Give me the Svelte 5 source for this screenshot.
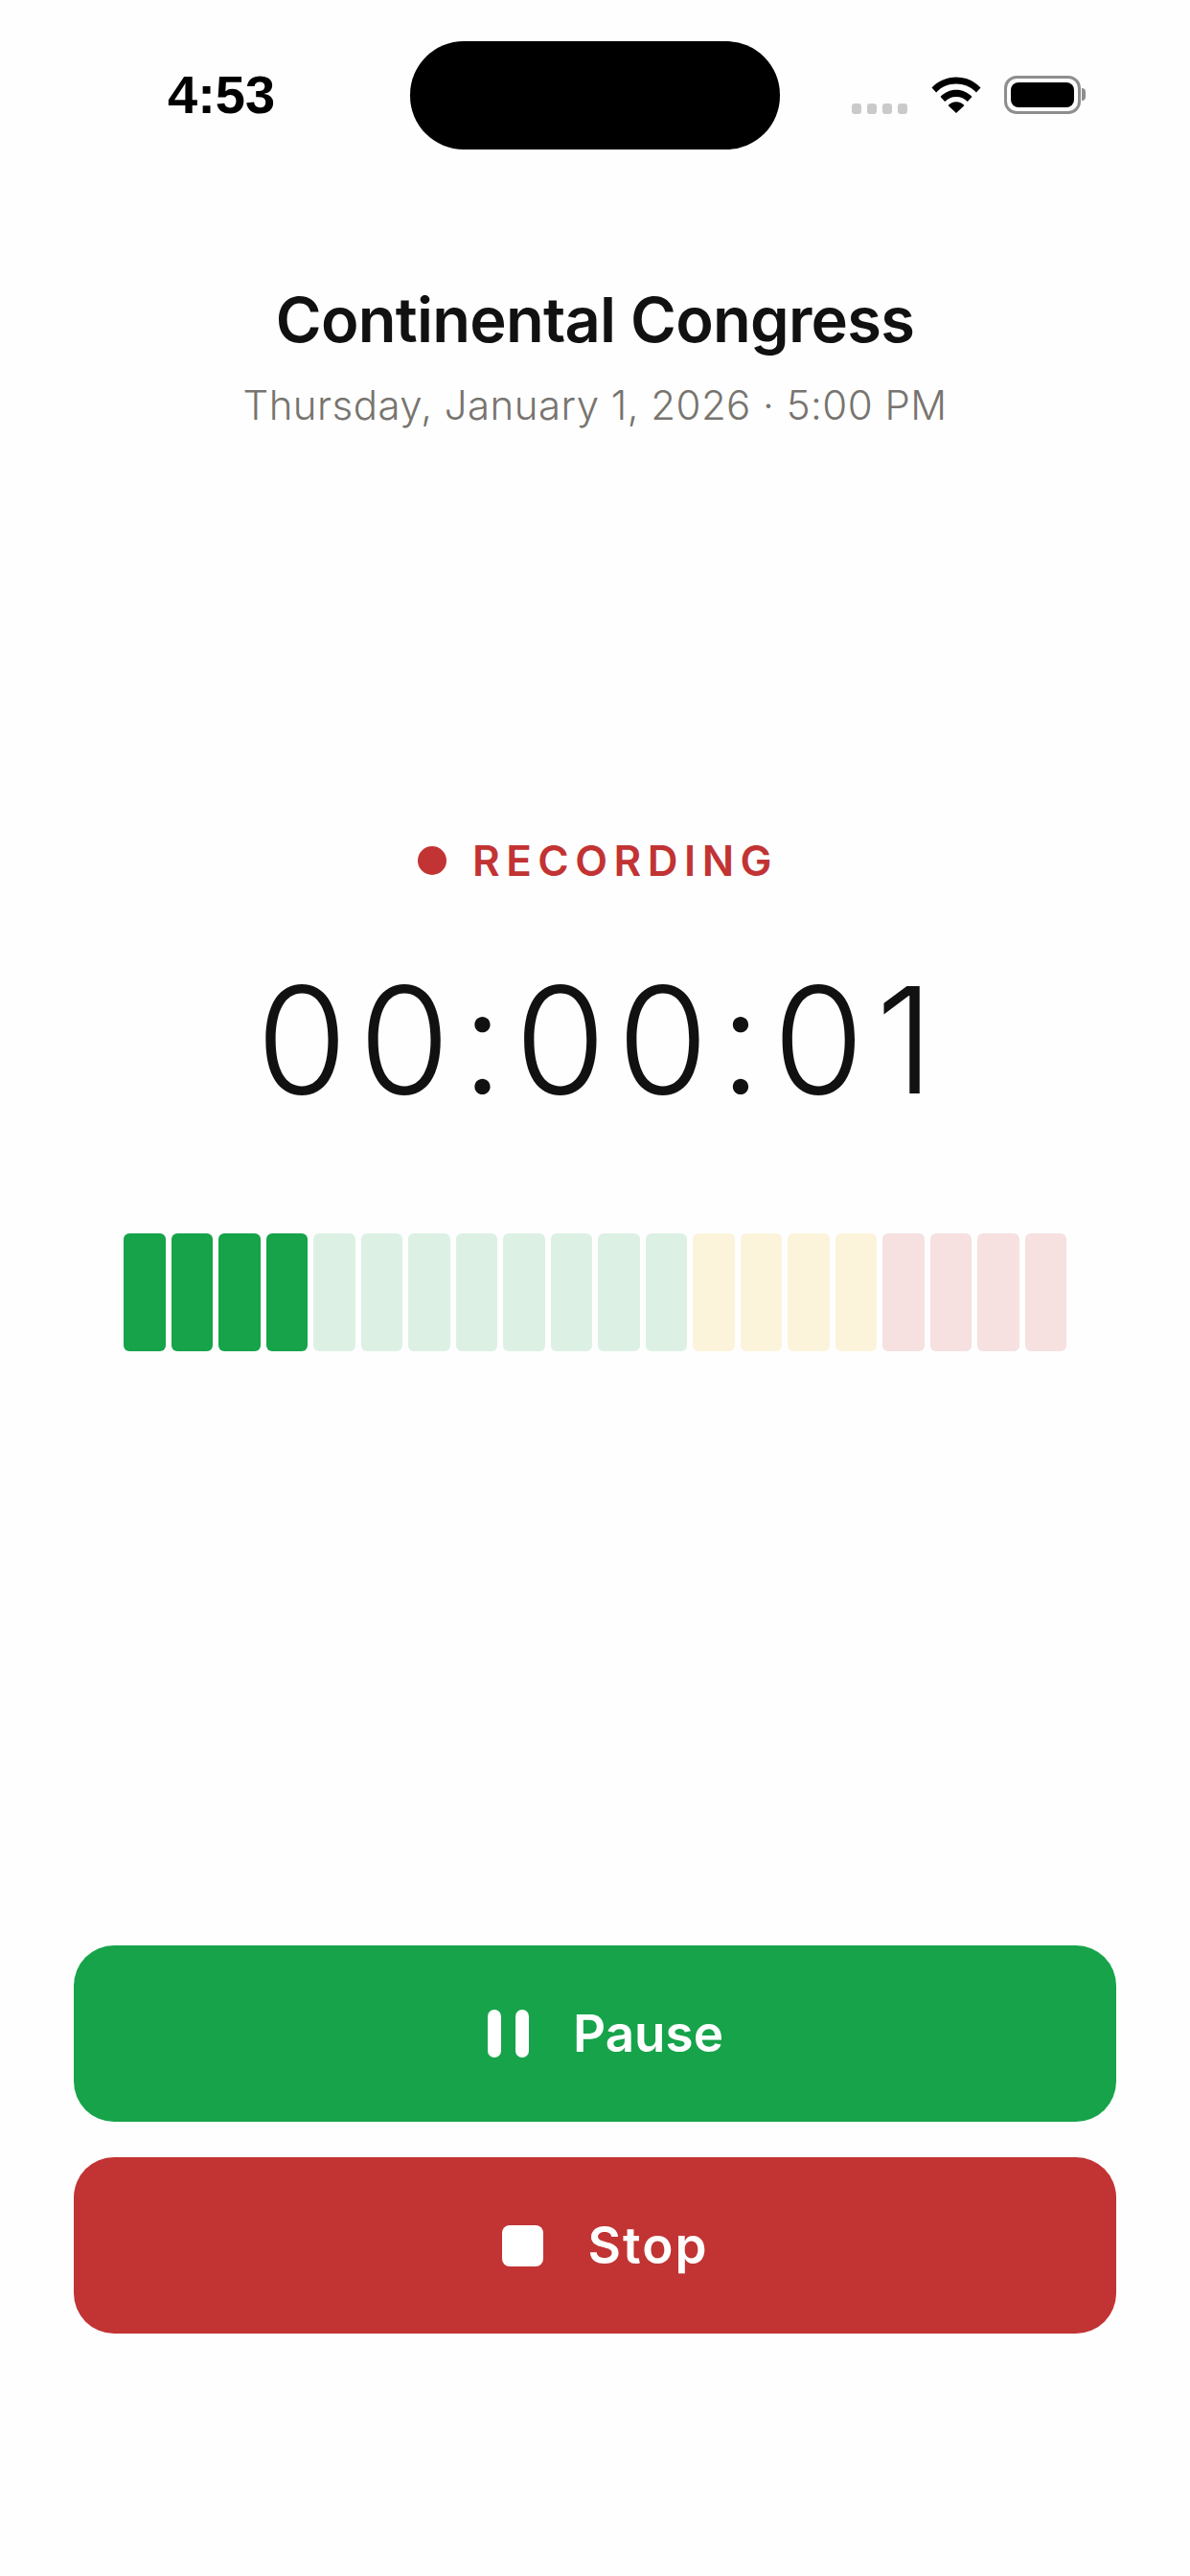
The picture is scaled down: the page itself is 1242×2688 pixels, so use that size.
<script lang="ts">
  // 녹음 화면: 상태바, 회의 정보, 타이머, 레벨 미터, 버튼
  const title = 'Continental Congress'
  const subtitle = 'Thursday, January 1, 2026 · 5:00 PM'
  const elapsed = '00:00:01'

  const activeBars = 4
  const bars = Array.from({ length: 20 }, (_, i) => ({
    zone: i < 12 ? 'green' : i < 16 ? 'yellow' : 'red',
    on: i < activeBars
  }))
</script>

<div class="screen">
  <header class="status-bar">
    <span class="clock">4:53</span>
    <div class="island"></div>
    <div class="status-icons">
      <div class="signal">
        <i></i><i></i><i></i><i></i>
      </div>
      <svg class="wifi" width="52" height="38" viewBox="0 0 52 38" aria-hidden="true">
        <path d="M0.5 11.5C7 4.5 16 0.5 26 0.5s19 4 25.5 11l-4.6 5C41.5 10.8 34.2 7.6 26 7.6S10.500 10.800 5.100 16.500z" />
        <path d="M9.500 21C13.800 16.500 19.600 13.800 26 13.800s12.200 2.700 16.500 7.200l-4.700 5C34.800 22.800 30.600 20.900 26 20.900s-8.800 1.900-11.800 5.100z" />
        <path d="M17.500 30C19.700 27.700 22.700 26.300 26 26.300s6.300 1.400 8.500 3.700L26 38z" />
      </svg>
      <div class="battery">
        <div class="battery-fill"></div>
      </div>
    </div>
  </header>

  <section class="meeting">
    <h1>{title}</h1>
    <p>{subtitle}</p>
  </section>

  <section class="recorder">
    <div class="rec-label">
      <span class="rec-dot"></span>
      <span>RECORDING</span>
    </div>
    <div class="timer">{elapsed}</div>
    <div class="meter">
      {#each bars as bar}
        <div class="bar {bar.zone}" class:on={bar.on}></div>
      {/each}
    </div>
  </section>

  <section class="actions">
    <button class="action action--pause">
      <span class="pause-icon"><i></i><i></i></span>
      Pause
    </button>
    <button class="action action--stop">
      <span class="stop-icon"></span>
      Stop
    </button>
  </section>
</div>

<style>
  :global(body) {
    margin: 0;
    background: #fff;
  }

  .screen {
    width: 1242px;
    height: 2688px;
    display: flex;
    flex-direction: column;
    align-items: center;
    font-family: Inter, 'Liberation Sans', sans-serif;
    color: #111;
    background: #fefefe;
    overflow: hidden;
  }

  /* 상태바 */
  .status-bar {
    box-sizing: border-box;
    width: 100%;
    height: 156px;
    padding-top: 43px;
    display: grid;
    grid-template-columns: 428px 386px 1fr;
  }

  .clock {
    font: 700 56px/1 'Liberation Sans', sans-serif;
    color: #000;
    padding: 28px 0 0 175px;
  }

  .island {
    height: 113px;
    border-radius: 56px;
    background: #000;
  }

  .status-icons {
    display: flex;
    align-items: flex-start;
    padding: 37px 0 0 75px;
  }

  .signal {
    display: flex;
    gap: 6px;
    margin-top: 28px;
  }

  .signal i {
    width: 10px;
    height: 11px;
    border-radius: 3px;
    background: #cacaca;
  }

  .wifi {
    margin-left: 25px;
    fill: #000;
  }

  .battery {
    position: relative;
    box-sizing: border-box;
    width: 80px;
    height: 40px;
    margin: -1px 0 0 24px;
    padding: 4px;
    border: 3px solid #8e8e8e;
    border-radius: 13px;
  }

  .battery::after {
    content: '';
    position: absolute;
    right: -8px;
    top: 10px;
    width: 4px;
    height: 13px;
    border-radius: 0 4px 4px 0;
    background: #8e8e8e;
  }

  .battery-fill {
    height: 100%;
    border-radius: 8px;
    background: #000;
  }

  /* 회의 정보 */
  .meeting {
    margin-top: 138px;
    text-align: center;
  }

  h1 {
    margin: 0;
    font-size: 65px;
    font-weight: 600;
    line-height: 80px;
    letter-spacing: -0.75px;
    color: #111;
  }

  .meeting p {
    margin: 22px 0 0;
    font-size: 42px;
    font-weight: 300;
    line-height: 54px;
    letter-spacing: 0.45px;
    color: #78746f;
  }

  /* 타이머, 레벨 미터 */
  .recorder {
    margin-top: 423px;
    display: flex;
    flex-direction: column;
    align-items: center;
  }

  .rec-label {
    display: flex;
    align-items: center;
    gap: 27px;
    padding-left: 6px;
    font-size: 44px;
    font-weight: 600;
    line-height: 50px;
    letter-spacing: 6.5px;
    color: #c23333;
  }

  .rec-dot {
    width: 30px;
    height: 30px;
    border-radius: 50%;
    background: #c23333;
  }

  .timer {
    margin-top: 72px;
    padding-left: 12px;
    font-size: 154px;
    font-weight: 300;
    line-height: 180px;
    letter-spacing: 12px;
    color: #111;
  }

  .meter {
    margin-top: 112px;
    width: 984px;
    height: 123px;
    display: grid;
    grid-template-columns: repeat(20, 1fr);
    gap: 6px;
  }

  .bar {
    border-radius: 6px;
  }

  .bar.green { background: #dcf1e4; }
  .bar.yellow { background: #fbf3da; }
  .bar.red { background: #f6e0e0; }
  .bar.green.on { background: #16a34a; }

  /* 하단 버튼 */
  .actions {
    box-sizing: border-box;
    width: 100%;
    margin-top: 620px;
    padding: 0 77px;
    display: flex;
    flex-direction: column;
    gap: 37px;
  }

  .action {
    height: 184px;
    padding: 0 0 0 22px;
    border: none;
    border-radius: 42px;
    display: flex;
    align-items: center;
    justify-content: center;
    gap: 46px;
    font-family: inherit;
    font-size: 53px;
    font-weight: 600;
    color: #fff;
  }

  .action--pause { background: #16a34a; }
  .action--stop {
    background: #c23333;
    letter-spacing: 2px;
  }

  .pause-icon {
    display: flex;
    gap: 15px;
  }

  .pause-icon i {
    width: 14px;
    height: 50px;
    border-radius: 7px;
    background: #fff;
  }

  .stop-icon {
    width: 43px;
    height: 43px;
    border-radius: 8px;
    background: #fff;
  }
</style>
